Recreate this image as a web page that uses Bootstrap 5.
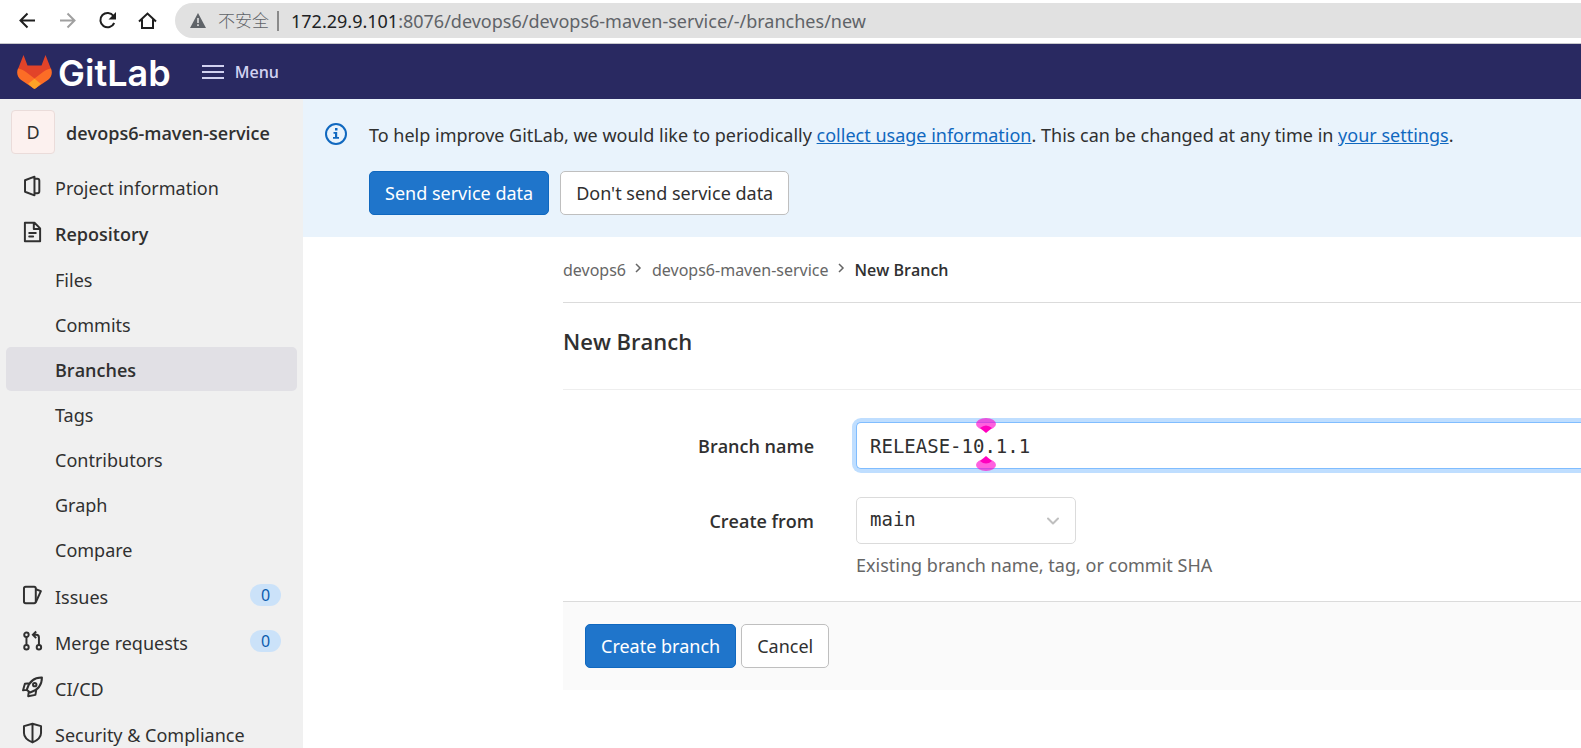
<!DOCTYPE html>
<html lang="en">
<head>
<meta charset="utf-8">
<meta name="viewport" content="width=device-width, initial-scale=1">
<title>New Branch · devops6-maven-service · GitLab</title>
<link href="https://cdn.jsdelivr.net/npm/bootstrap@5.3.0/dist/css/bootstrap.min.css" rel="stylesheet">
<style>
  body { font-family: "Noto Sans", "Noto Sans CJK SC", sans-serif; font-size: 18px; line-height: 24px; color: #303030; background: #fff; }
  a { color: inherit; text-decoration: none; }
  svg { display: block; flex: none; }
  .semi { font-family: "Open Sans", sans-serif; font-weight: 600; }

  .browser-bar { height: 44px; border-bottom: 1px solid #c8c8cc; padding: 3px 0 5px 17px; }
  .browser-bar .tools { gap: 18px; }
  .browser-bar .tool { border: 0; background: none; padding: 0; width: 22px; height: 22px; color: #1f1f1f; }
  .browser-bar .tool:disabled { color: #a0a0a0; }
  .omnibox { background: #e1e1e1; border-radius: 18px 0 0 18px; color: #5f6368; margin-left: 16px; padding-left: 15px; }
  .omnibox .divider { width: 2px; height: 20px; background: #8a8a8a; margin: 0 12px 0 8px; }
  .omnibox .host { color: #202124; }
  .unsafe { font-size: 17px; font-weight: 300; margin-left: 12px; }

  .topbar { height: 55px; background: #292961; padding: 0 17px; }
  .wordmark { font-family: Inter, sans-serif; font-weight: 600; font-size: 36px; line-height: 40px; color: #fff; margin: 2px 0 0 6px; }
  .menu-btn { border: 0; background: none; color: #d1d1f0; font-size: 16px; padding: 1px 0 0; margin-left: 31px; }
  .menu-btn svg { margin-right: 11px; }

  .side { width: 303px; background: #f0f0f0; padding: 11px 6px 0; flex: none; }
  .project { height: 44px; padding-left: 5px; margin-bottom: 11px; }
  .project-name { margin-left: 11px; padding-top: 2px; }
  .avatar { width: 44px; height: 44px; border: 1px solid #eadcda; border-radius: 4px; background: #fcf1ef; }
  .side-link { height: 44px; border-radius: 5px; padding: 2px 16px 0; margin-bottom: 2px; }
  .side-link svg { margin: 0 12px 4px 0; }
  .sub-list { padding-bottom: 2px; }
  .sub-link { height: 44px; border-radius: 5px; padding: 2px 16px 0 49px; margin-bottom: 1px; }
  .current { background: #e1e0e5; }
  .count { background: #cbe2f9; color: #0b5cad; border-radius: 11px; width: 31px; height: 22px; font-size: 16px; line-height: 22px; margin-bottom: 4px; }

  .notice { background: #e9f3fc; padding: 24px 22px 22px; min-height: 138px; }
  .notice a { color: #1068bf; text-decoration: underline; }
  .notice-body { margin-left: 22px; }
  .btn { --bs-btn-font-size: 18px; --bs-btn-line-height: 24px; --bs-btn-padding-x: 15px; --bs-btn-padding-y: 9px; --bs-btn-border-radius: 5px; --bs-btn-color: #303030; --bs-btn-border-color: #bfbfbf; --bs-btn-bg: #fff; }
  .btn-primary { --bs-btn-color: #fff; --bs-btn-bg: #1f75cb; --bs-btn-border-color: #1068bf; }

  .page { margin-left: 260px; }
  .crumbs { font-size: 16px; height: 66px; border-bottom: 1px solid #dbdbdb; color: #666; }
  .crumbs svg { margin: 0 10px 4px 8px; }
  .crumbs .here { color: #303030; }
  .page-title { font-size: 22px; line-height: 28px; padding: 24px 0 34px; margin: 0 0 32px; border-bottom: 1px solid #eee; }
  .field-row { margin-bottom: 28px; }
  .field-label { width: 251px; padding-top: 12px; margin-right: 42px; text-align: right; flex: none; }
  .field { height: 47px; border-radius: 5px; font-family: "DejaVu Sans Mono", monospace; font-size: 19px; padding: 0 13px; color: #303030; }
  .field:focus, .field-active { border-color: #80bdff; box-shadow: 0 0 0 4px #bfdeff; }
  .input-box { border-top-right-radius: 0; border-bottom-right-radius: 0; border-right: 0; }
  .handle { position: absolute; left: 120px; }
  .handle-top { top: -4px; }
  .handle-bottom { bottom: -2px; }
  .from-box { width: 220px; }
  .form-select.field { border-color: #dbdbdb; padding-bottom: 2px; background-image: url("data:image/svg+xml,%3csvg xmlns='http://www.w3.org/2000/svg' viewBox='0 0 14 14'%3e%3cpath fill='none' stroke='%23bfbfbf' stroke-width='2' stroke-linecap='round' stroke-linejoin='round' d='M2 4.500l5 5 5-5'/%3e%3c/svg%3e"); background-size: 14px 14px; background-position: right 15px center; }
  .hint { color: #666; padding-top: 9px; }
  .actions { background: #fafafa; border-top: 1px solid #dbdbdb; padding: 22px; margin-top: -4px; gap: 5px; }
</style>
</head>
<body class="vh-100 overflow-hidden d-flex flex-column">

<div class="browser-bar d-flex flex-shrink-0">
  <div class="tools d-flex align-items-center">
    <button class="tool" aria-label="Back"><svg width="22" height="22" viewBox="0 0 22 22" fill="none" stroke="currentColor" stroke-width="2"><path d="M18 10.500H3.500M10.500 3.500l-7 7 7 7"/></svg></button>
    <button class="tool" aria-label="Forward" disabled><svg width="22" height="22" viewBox="0 0 22 22" fill="none" stroke="currentColor" stroke-width="2"><path d="M3 10.500h14.500M10.500 3.500l7 7-7 7"/></svg></button>
    <button class="tool" aria-label="Reload"><svg width="22" height="22" viewBox="0 0 22 22" fill="none" stroke="currentColor" stroke-width="2"><path d="M16.500 6A7.200 7.200 0 1 0 17.200 13"/><path d="M19 2v7.500h-7.500z" fill="currentColor" stroke="none"/></svg></button>
    <button class="tool" aria-label="Home"><svg width="22" height="22" viewBox="0 0 22 22" fill="none" stroke="currentColor" stroke-width="2"><path d="M2 11.500L10.500 3.500l8.500 8M5 9.500V18h11V9.500"/></svg></button>
  </div>
  <div class="omnibox d-flex align-items-center flex-grow-1 text-nowrap">
    <svg width="16" height="15" viewBox="0 0 16 15"><path d="M8 0l8 15H0z" fill="#5f6368"/><path d="M7.200 5h1.600v5H7.200zM7.200 11.300h1.600V13H7.200z" fill="#e1e1e1"/></svg>
    <span class="unsafe" lang="zh-CN">不安全</span>
    <span class="divider"></span>
    <span><span class="host">172.29.9.101</span>:8076/devops6/devops6-maven-service/-/branches/new</span>
  </div>
</div>

<header class="topbar d-flex align-items-center flex-shrink-0">
  <a href="#" class="d-flex align-items-center">
    <svg width="35" height="34" viewBox="0 0 35 34">
      <path fill="#e24329" d="M6.500 0L1 14l16.500 19L34 14 28.500 0l-4 10.500h-14z"/>
      <path fill="#fc6d26" d="M1 13.500c-1.800 4.500-.6 8.800 2.800 11.300L17.500 34l13.700-9.200c3.400-2.500 4.600-6.800 2.800-11.300-3 .4-5.500 1.700-8 3.600l-8.500 6.400L9 17.100c-2.500-1.900-5-3.200-8-3.600z"/>
      <path fill="#fca326" d="M11.200 28.700l6.300-5 6.300 5-4.700 4.300c-1 .9-2.200.9-3.200 0z"/>
    </svg>
    <span class="wordmark">GitLab</span>
  </a>
  <button class="menu-btn semi d-flex align-items-center">
    <svg width="22" height="16" viewBox="0 0 22 16" stroke="currentColor" stroke-width="2"><path d="M0 2h22M0 8h22M0 14h22"/></svg>
    <span>Menu</span>
  </button>
</header>

<div class="d-flex flex-grow-1 overflow-hidden">
  <nav class="side" aria-label="Project">
    <a href="#" class="project d-flex align-items-center">
      <span class="avatar d-flex align-items-center justify-content-center">D</span>
      <span class="project-name semi">devops6-maven-service</span>
    </a>
    <a href="#" class="side-link d-flex align-items-center">
      <svg width="21" height="22" viewBox="0 0 16 16" fill="none" stroke="#303030" stroke-width="1.500" stroke-linejoin="round"><path d="M2.300 3.600L9.500.9v14.200l-7.200-2.700zM9.500 2.500h2.200q1.500 0 1.500 1.500v8q0 1.500-1.500 1.500H9.500"/></svg>Project information</a>
    <a href="#" class="side-link semi d-flex align-items-center">
      <svg width="21" height="22" viewBox="0 0 16 16" fill="none" stroke="#303030" stroke-width="1.500" stroke-linejoin="round" stroke-linecap="round"><path d="M2.200.9h7.300l4.300 4.300v9.900H2.200zM9 1v4.700h4.500M5.500 8.700h5M5.500 11.500h3"/></svg>Repository</a>
    <div class="sub-list">
      <a href="#" class="sub-link d-flex align-items-center">Files</a>
      <a href="#" class="sub-link d-flex align-items-center">Commits</a>
      <a href="#" class="sub-link current semi d-flex align-items-center" aria-current="page">Branches</a>
      <a href="#" class="sub-link d-flex align-items-center">Tags</a>
      <a href="#" class="sub-link d-flex align-items-center">Contributors</a>
      <a href="#" class="sub-link d-flex align-items-center">Graph</a>
      <a href="#" class="sub-link d-flex align-items-center">Compare</a>
    </div>
    <a href="#" class="side-link d-flex align-items-center">
      <svg width="21" height="22" viewBox="0 0 16 16" fill="none" stroke="#303030" stroke-width="1.500" stroke-linejoin="round"><rect x="1.500" y="1.700" width="9" height="12.600" rx="1.300"/><path d="M10.500 3.600l3.900 1.400-3.900 8.500"/></svg>Issues
      <span class="count ms-auto text-center">0</span></a>
    <a href="#" class="side-link d-flex align-items-center">
      <svg width="21" height="22" viewBox="0 0 16 16" fill="none" stroke="#303030" stroke-width="1.500"><circle cx="3.400" cy="3.200" r="1.700"/><circle cx="3.400" cy="12.800" r="1.700"/><circle cx="12.900" cy="12.800" r="1.700"/><path d="M3.400 5v6M12.900 11V5.300q0-2-2-2H8.500M10.800.8L8.300 3.300l2.500 2.500"/></svg>Merge requests
      <span class="count ms-auto text-center">0</span></a>
    <a href="#" class="side-link d-flex align-items-center">
      <svg width="21" height="22" viewBox="0 0 16 16" fill="none" stroke="#303030" stroke-width="1.500" stroke-linejoin="round"><path d="M15.200.8C9.500.7 5.500 3.500 3.600 10.200l2.600 2C12 10.500 15.200 7 15.200.8zM5.800 5.200l-3.600.4L.8 10.500l2.800-.3M5.200 11.500l-.5 3.500 5.500-1 .8-4.500"/><circle cx="9.700" cy="6.200" r="1.300"/></svg>CI/CD</a>
    <a href="#" class="side-link d-flex align-items-center">
      <svg width="21" height="22" viewBox="0 0 16 16" fill="none" stroke="#303030" stroke-width="1.500" stroke-linejoin="round"><path d="M8 1l6.500 1.800V8c0 3-2.500 5.500-6.500 7.200C4 13.500 1.500 11 1.500 8V2.800zM8 1v14"/></svg>Security &amp; Compliance</a>
  </nav>

  <main class="flex-grow-1">
    <section class="notice d-flex">
      <svg width="22" height="22" viewBox="0 0 22 22"><circle cx="11" cy="11" r="10" fill="none" stroke="#1068bf" stroke-width="2"/><path d="M10 5h2.500v2.500H10zM8.500 9h3.700v5H14v1.800H8V14h2v-3.200H8.500z" fill="#1068bf"/></svg>
      <div class="notice-body">
        <p class="mb-4">To help improve GitLab, we would like to periodically <a href="#">collect usage information</a>. This can be changed at any time in <a href="#">your settings</a>.</p>
        <div class="d-flex" style="gap:11px">
          <button class="btn btn-primary">Send service data</button>
          <button class="btn">Don't send service data</button>
        </div>
      </div>
    </section>

    <div class="page">
      <nav class="crumbs d-flex align-items-center" aria-label="Breadcrumb">
        <a href="#">devops6</a>
        <svg width="8" height="10" viewBox="0 0 8 10" fill="none" stroke="#666" stroke-width="1.500"><path d="M2 1l4 4-4 4"/></svg>
        <a href="#">devops6-maven-service</a>
        <svg width="8" height="10" viewBox="0 0 8 10" fill="none" stroke="#666" stroke-width="1.500"><path d="M2 1l4 4-4 4"/></svg>
        <a href="#" class="here semi">New Branch</a>
      </nav>
      <h1 class="page-title semi">New Branch</h1>
      <form>
        <div class="field-row d-flex">
          <label class="field-label semi" for="branch">Branch name</label>
          <div class="position-relative flex-grow-1">
            <input id="branch" class="form-control field field-active input-box" type="text" value="RELEASE-10.1.1">
            <svg class="handle handle-top" width="20" height="15" viewBox="0 0 20 15"><ellipse cx="10" cy="6" rx="10" ry="6" fill="#ff00cc" fill-opacity=".62"/><path d="M4 10q6-5 12 0l-6 5z" fill="#ff00bf"/></svg>
            <svg class="handle handle-bottom" width="20" height="15" viewBox="0 0 20 15"><ellipse cx="10" cy="9" rx="10" ry="6" fill="#ff00cc" fill-opacity=".62"/><path d="M4 5q6 5 12 0l-6-5z" fill="#ff00bf"/></svg>
          </div>
        </div>
        <div class="field-row d-flex">
          <label class="field-label semi" for="from">Create from</label>
          <div>
            <select id="from" class="form-select field from-box"><option>main</option></select>
            <div class="hint">Existing branch name, tag, or commit SHA</div>
          </div>
        </div>
        <div class="actions d-flex">
          <button type="button" class="btn btn-primary">Create branch</button>
          <button type="button" class="btn">Cancel</button>
        </div>
      </form>
    </div>
  </main>
</div>
<script src="https://cdn.jsdelivr.net/npm/bootstrap@5.3.0/dist/js/bootstrap.bundle.min.js"></script>
</body>
</html>
